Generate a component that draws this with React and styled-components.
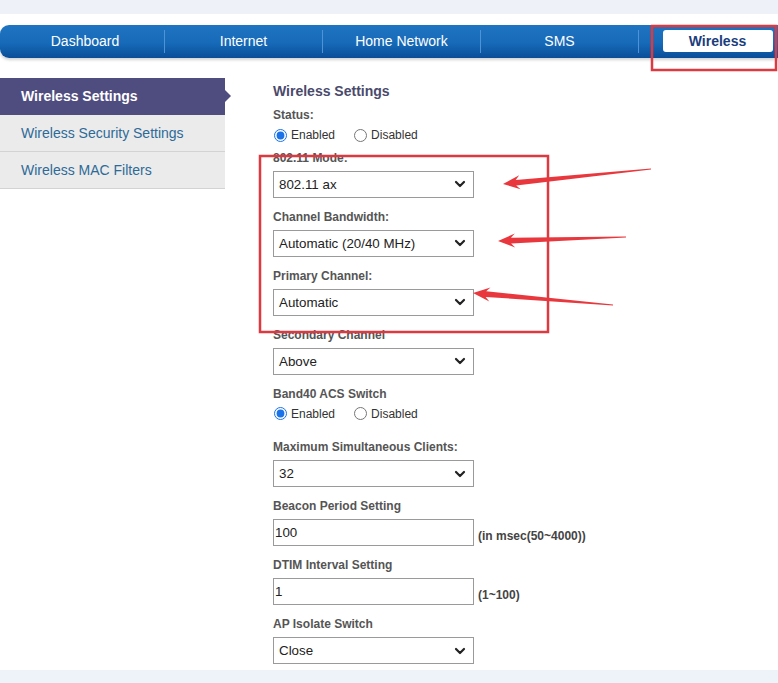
import styled, { createGlobalStyle } from 'styled-components';

const GlobalStyle = createGlobalStyle`
  html, body {
    margin: 0;
    padding: 0;
    background: #ffffff;
    font-family: "Liberation Sans", Arial, sans-serif;
    overflow: hidden;
  }
`;

const navItems = ['Dashboard', 'Internet', 'Home Network', 'SMS', 'Wireless'];
const sideItems = ['Wireless Settings', 'Wireless Security Settings', 'Wireless MAC Filters'];

// arrow shape: thin tail widening to a head at the tip
const arrowPoints = (tx, ty, ex, ey) => {
    const dx = ex - tx, dy = ey - ty;
    const len = Math.hypot(dx, dy);
    const ux = dx / len, uy = dy / len;
    const nx = -uy, ny = ux;
    const hb = [tx + 17 * ux, ty + 17 * uy];
    const sb = [tx + 13 * ux, ty + 13 * uy];
    const pts = [
        [tx, ty],
        [hb[0] + 7 * nx, hb[1] + 7 * ny],
        [sb[0] + 2.8 * nx, sb[1] + 2.8 * ny],
        [ex + 0.4 * nx, ey + 0.4 * ny],
        [ex - 0.4 * nx, ey - 0.4 * ny],
        [sb[0] - 2.8 * nx, sb[1] - 2.8 * ny],
        [hb[0] - 7 * nx, hb[1] - 7 * ny],
    ];
    return pts.map(p => p.map(v => v.toFixed(1)).join(',')).join(' ');
};

const Chevron = () => (
    <svg width="12" height="8" viewBox="0 0 12 8">
        <path d="M2 2 L6 6 L10 2" fill="none" stroke="#222" strokeWidth="2.2" strokeLinecap="round" strokeLinejoin="round" />
    </svg>
);

const Select = ({ value }) => (
    <SelectBox>
        <span>{value}</span>
        <Chevron />
    </SelectBox>
);

const RadioPair = ({ name }) => (
    <RadioRow>
        <RadioLabel><input type="radio" name={name} defaultChecked />Enabled</RadioLabel>
        <RadioLabel><input type="radio" name={name} />Disabled</RadioLabel>
    </RadioRow>
);

const App = () => {
    return (
        <Page>
            <GlobalStyle />
            <TopBand />
            <Nav>
                {navItems.map((item, i) => (
                    <NavItem key={item} $first={i === 0}>
                        <NavLabel $active={item === 'Wireless'}>{item}</NavLabel>
                    </NavItem>
                ))}
            </Nav>
            <Body>
                <Sidebar>
                    {sideItems.map((item, i) => (
                        <SideItem key={item} $active={i === 0}>{item}</SideItem>
                    ))}
                </Sidebar>
                <Content>
                    <Heading>Wireless Settings</Heading>
                    <Label>Status:</Label>
                    <RadioPair name="status" />
                    <Field>
                        <Label>802.11 Mode:</Label>
                        <Select value="802.11 ax" />
                    </Field>
                    <Field>
                        <Label>Channel Bandwidth:</Label>
                        <Select value="Automatic (20/40 MHz)" />
                    </Field>
                    <Field>
                        <Label>Primary Channel:</Label>
                        <Select value="Automatic" />
                    </Field>
                    <Field>
                        <Label>Secondary Channel</Label>
                        <Select value="Above" />
                    </Field>
                    <Label>Band40 ACS Switch</Label>
                    <RadioPair name="acs" />
                    <Field $gapTop>
                        <Label>Maximum Simultaneous Clients:</Label>
                        <Select value="32" />
                    </Field>
                    <Field>
                        <Label>Beacon Period Setting</Label>
                        <InputRow>
                            <TextInput defaultValue="100" />
                            <Hint>(in msec(50~4000))</Hint>
                        </InputRow>
                    </Field>
                    <Field>
                        <Label>DTIM Interval Setting</Label>
                        <InputRow>
                            <TextInput defaultValue="1" />
                            <Hint>(1~100)</Hint>
                        </InputRow>
                    </Field>
                    <Field $last>
                        <Label>AP Isolate Switch</Label>
                        <Select value="Close" />
                    </Field>
                </Content>
            </Body>
            <BottomBand />
            <Annotations width="778" height="683" viewBox="0 0 778 683">
                <rect x="652" y="26" width="124" height="44" fill="none" stroke="#dc3a40" strokeWidth="2.5" />
                <rect x="260" y="156" width="288" height="176" fill="none" stroke="#dc3a40" strokeWidth="2.5" />
                <polygon points={arrowPoints(503, 184, 651, 169)} fill="#e8383d" />
                <polygon points={arrowPoints(498, 241, 626, 237)} fill="#e8383d" />
                <polygon points={arrowPoints(473, 293, 613, 305)} fill="#e8383d" />
            </Annotations>
        </Page>
    );
};

const Page = styled.div`
position: relative;
width: 778px;
height: 683px;
overflow: hidden;
display: flex;
flex-direction: column;
`;

const TopBand = styled.div`
height: 14px;
background: #eef2f8;
margin-bottom: 11px;
flex-shrink: 0;
`;

const Nav = styled.div`
display: flex;
align-items: center;
box-sizing: border-box;
width: 800px;
height: 33px;
flex-shrink: 0;
padding-left: 6px;
padding-bottom: 1px;
background: linear-gradient(to bottom, #1f74c2 0%, #166ab8 55%, #0a4d98 100%);
border-radius: 9px 0 0 9px;
box-shadow: 0 2px 3px rgba(0, 0, 0, 0.18);
`;

const NavItem = styled.div`
box-sizing: border-box;
width: 158px;
height: 23px;
flex-shrink: 0;
display: flex;
align-items: center;
justify-content: center;
border-left: ${p => p.$first ? 'none' : '1px solid #4f93d6'};
`;

const NavLabel = styled.div`
font-size: 14px;
color: ${p => p.$active ? '#1b3d7c' : '#ffffff'};
font-weight: ${p => p.$active ? 'bold' : 'normal'};
background: ${p => p.$active ? '#ffffff' : 'transparent'};
border-radius: 3px;
width: ${p => p.$active ? '110px' : 'auto'};
height: 22px;
line-height: 22px;
text-align: center;
`;

const Body = styled.div`
display: flex;
flex-shrink: 0;
padding-top: 20px;
`;

const Sidebar = styled.div`
width: 225px;
flex-shrink: 0;
align-self: flex-start;
`;

const SideItem = styled.div`
position: relative;
height: 36px;
line-height: 36px;
padding-left: 21px;
font-size: 14px;
font-weight: ${p => p.$active ? 'bold' : 'normal'};
color: ${p => p.$active ? '#ffffff' : '#2d6a98'};
background: ${p => p.$active ? '#4f4d80' : '#ebebeb'};
border-bottom: 1px solid ${p => p.$active ? '#4f4d80' : '#d3d3d3'};

&::after {
    content: '';
    display: ${p => p.$active ? 'block' : 'none'};
    position: absolute;
    right: -6px;
    top: 12px;
    border-left: 6px solid #4f4d80;
    border-top: 6px solid transparent;
    border-bottom: 6px solid transparent;
}
`;

const Content = styled.div`
padding-left: 48px;
padding-top: 5px;
display: flex;
flex-direction: column;
`;

const Heading = styled.div`
font-size: 14px;
font-weight: bold;
color: #4a4a6c;
line-height: 16px;
margin-bottom: 9px;
`;

const Label = styled.div`
font-size: 12px;
font-weight: bold;
color: #555555;
line-height: 14px;
`;

const RadioRow = styled.div`
display: flex;
gap: 18px;
height: 16px;
margin-top: 5px;
margin-bottom: 7.5px;
align-items: center;
`;

const RadioLabel = styled.label`
display: flex;
align-items: center;
font-size: 12px;
color: #333333;

input {
    margin: 0 4px 0 1px;
    width: 13px;
    height: 13px;
    accent-color: #1a73e8;
}
`;

const Field = styled.div`
display: flex;
flex-direction: column;
gap: 6px;
margin-bottom: ${p => p.$last ? '6px' : '12px'};
margin-top: ${p => p.$gapTop ? '11px' : '0'};
`;

const SelectBox = styled.div`
box-sizing: border-box;
width: 201px;
height: 27px;
border: 1px solid #9a9a9a;
display: flex;
align-items: center;
justify-content: space-between;
padding: 0 7px 0 5px;
font-size: 13.33px;
color: #222222;
background: #ffffff;
`;

const InputRow = styled.div`
display: flex;
align-items: center;
gap: 4px;
`;

const TextInput = styled.input`
box-sizing: border-box;
width: 201px;
height: 27px;
border: 1px solid #9a9a9a;
padding: 0 1px;
font-family: "Liberation Sans", Arial, sans-serif;
font-size: 13.33px;
color: #222222;
outline: none;
`;

const Hint = styled.span`
font-size: 12px;
font-weight: bold;
color: #444444;
padding-top: 6px;
`;

const BottomBand = styled.div`
flex: 1;
background: #eef3f9;
`;

const Annotations = styled.svg`
position: absolute;
top: 0;
left: 0;
pointer-events: none;
`;

export default App;
